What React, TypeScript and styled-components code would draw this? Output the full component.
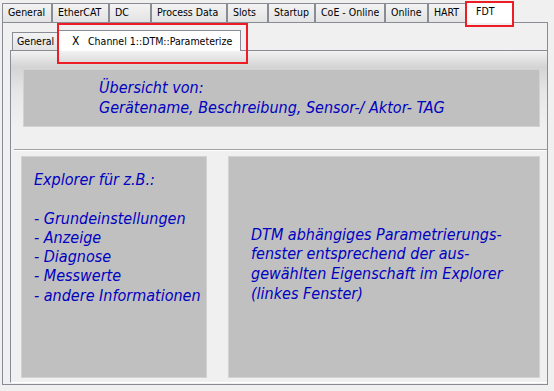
import styled, { createGlobalStyle } from "styled-components";

// Types
type TabDef = { label: string; width: number };

const outerTabs: TabDef[] = [
  { label: "General", width: 50 },
  { label: "EtherCAT", width: 57 },
  { label: "DC", width: 42 },
  { label: "Process Data", width: 76 },
  { label: "Slots", width: 41 },
  { label: "Startup", width: 47 },
  { label: "CoE - Online", width: 70 },
  { label: "Online", width: 43 },
  { label: "HART", width: 38 },
];

const explorerItems = [
  "- Grundeinstellungen",
  "- Anzeige",
  "- Diagnose",
  "- Messwerte",
  "- andere Informationen",
];

const App = () => {
  return (
    <Page>
      <GlobalStyle />
      <TabStrip>
        {outerTabs.map((t) => (
          <Tab key={t.label} $w={t.width}>
            {t.label}
          </Tab>
        ))}
        <ActiveTab $w={48}>
          FDT
          <Marker $top={-1} $left={-2} $right={-1} $bottom={-4} />
        </ActiveTab>
      </TabStrip>

      <OuterPanel>
        <InnerTabStrip>
          <InnerTab>General</InnerTab>
          <InnerActiveTab>
            <CloseMark>X</CloseMark>
            Channel 1::DTM::Parameterize
            <Marker $top={-8} $left={-2} $right={-8} $bottom={-13} />
          </InnerActiveTab>
        </InnerTabStrip>

        <InnerPanel>
          <TopArea>
            <TopBox>
              <BlueText>
                Übersicht von:
                <br />
                Gerätename, Beschreibung, Sensor-/ Aktor- TAG
              </BlueText>
            </TopBox>
          </TopArea>
          <Separator />
          <BottomRow>
            <ExplorerBox>
              <BlueText>
                Explorer für z.B.:
                <br />
                <br />
                {explorerItems.map((item) => (
                  <span key={item}>
                    {item}
                    <br />
                  </span>
                ))}
              </BlueText>
            </ExplorerBox>
            <DtmBox>
              <BlueText>
                DTM abhängiges Parametrierungs-
                <br />
                fenster entsprechend der aus-
                <br />
                gewählten Eigenschaft im Explorer
                <br />
                (linkes Fenster)
              </BlueText>
            </DtmBox>
          </BottomRow>
        </InnerPanel>
      </OuterPanel>
    </Page>
  );
};

// Styles
const GlobalStyle = createGlobalStyle`
  html, body {
    margin: 0;
    padding: 0;
    background: #f0f0f0;
  }
  body {
    width: 554px;
    height: 391px;
    overflow: hidden;
    font-family: "DejaVu Sans Condensed", "DejaVu Sans", sans-serif;
  }
`;

const Page = styled.div`
  box-sizing: border-box;
  width: 554px;
  height: 391px;
  padding: 0 6px 0 2px;
  background: #f0f0f0;
`;

const TabStrip = styled.div`
  display: flex;
  align-items: flex-end;
  height: 22px;
`;

const Tab = styled.div<{ $w: number }>`
  box-sizing: border-box;
  width: ${(p) => p.$w}px;
  height: 19px;
  padding-left: 5px;
  border: 1px solid #898c95;
  border-bottom: none;
  background: linear-gradient(#f3f3f3, #e3e3e3);
  font-family: "DejaVu Sans Condensed", "DejaVu Sans", sans-serif;
  font-stretch: condensed;
  font-size: 10.5px;
  line-height: 17px;
  color: #000;
  white-space: nowrap;
`;

const ActiveTab = styled(Tab)`
  position: relative;
  z-index: 2;
  height: 22px;
  margin-bottom: -1px;
  padding-left: 9px;
  background: #fff;
  line-height: 19px;
`;

const Marker = styled.span<{ $top: number; $left: number; $right: number; $bottom: number }>`
  position: absolute;
  top: ${(p) => p.$top}px;
  left: ${(p) => p.$left}px;
  right: ${(p) => p.$right}px;
  bottom: ${(p) => p.$bottom}px;
  border: 2px solid #ee1c24;
  pointer-events: none;
  z-index: 5;
`;

const OuterPanel = styled.div`
  box-sizing: border-box;
  display: flex;
  flex-direction: column;
  width: 546px;
  height: 363px;
  padding: 0 0 1px 7px;
  border: 1px solid #898c95;
  background: #f0f0f0;
`;

const InnerTabStrip = styled.div`
  display: flex;
  align-items: flex-end;
  height: 27px;
  padding-left: 2px;
`;

const InnerTab = styled.div`
  box-sizing: border-box;
  width: 46px;
  height: 18px;
  padding-left: 4px;
  border: 1px solid #898c95;
  border-bottom: none;
  background: linear-gradient(#f3f3f3, #e3e3e3);
  font-stretch: condensed;
  font-size: 10.5px;
  line-height: 17px;
  white-space: nowrap;
`;

const InnerActiveTab = styled.div`
  position: relative;
  z-index: 2;
  box-sizing: border-box;
  display: flex;
  align-items: center;
  width: 183px;
  height: 21px;
  margin-bottom: -1px;
  padding: 0 0 1px 13px;
  border: 1px solid #898c95;
  border-bottom: none;
  background: #fff;
  font-stretch: condensed;
  font-size: 10.5px;
  white-space: nowrap;
`;

const CloseMark = styled.span`
  width: 16px;
  font-size: 12px;
`;

const InnerPanel = styled.div`
  box-sizing: border-box;
  display: flex;
  flex-direction: column;
  height: 333px;
  border-top: 1px solid #898c95;
  border-left: 1px solid #898c95;
  border-bottom: 1px solid #ffffff;
`;

const TopArea = styled.div`
  box-sizing: border-box;
  height: 98px;
  padding: 18px 7px 0 12px;
  background: linear-gradient(#f2f2f2 0px, #d4d4d4 16px, #e6e6e6 40px, #f0f0f0 76px);
`;

const GreyBox = styled.div`
  box-sizing: border-box;
  display: flex;
  background: #c0c0c0;
  border: 1px solid #d2d2d2;
`;

const TopBox = styled(GreyBox)`
  height: 58px;
  align-items: center;
  padding-left: 75px;
  line-height: 20px;
`;

const Separator = styled.div`
  height: 1px;
  margin-left: 3px;
  border-top: 1px solid #a0a0a0;
  background: #fff;
`;

const BottomRow = styled.div`
  display: flex;
  gap: 21px;
  padding: 5px 7px 0 10px;
`;

const ExplorerBox = styled(GreyBox)`
  width: 186px;
  height: 222px;
  padding: 13px 0 0 12px;
  line-height: 19.3px;
`;

const DtmBox = styled(GreyBox)`
  flex: 1;
  height: 222px;
  align-items: center;
  padding: 0 0 6px 22px;
  line-height: 19.7px;
`;

const BlueText = styled.div`
  font-family: "DejaVu Sans Condensed", "DejaVu Sans", sans-serif;
  font-stretch: condensed;
  font-style: italic;
  font-size: 16px;
  color: #0000c0;
  white-space: nowrap;
`;

// Exports
export default App;
